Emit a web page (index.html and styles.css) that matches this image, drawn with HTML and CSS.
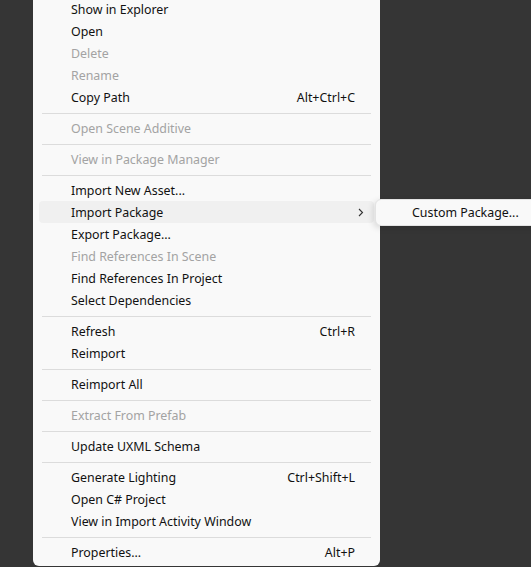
FILE: index.html
```html
<!DOCTYPE html>
<html>
<head>
<meta charset="utf-8">
<link rel="stylesheet" href="styles.css">
</head>
<body>
<div class="menu">
  <div class="item"><span>Show in Explorer</span></div>
  <div class="item"><span>Open</span></div>
  <div class="item disabled"><span>Delete</span></div>
  <div class="item disabled"><span>Rename</span></div>
  <div class="item"><span>Copy Path</span><span class="key">Alt+Ctrl+C</span></div>
  <div class="sep"></div>
  <div class="item disabled"><span>Open Scene Additive</span></div>
  <div class="sep"></div>
  <div class="item disabled"><span>View in Package Manager</span></div>
  <div class="sep"></div>
  <div class="item"><span>Import New Asset...</span></div>
  <div class="item hover"><span>Import Package</span>
    <svg class="chev" width="6" height="9" viewBox="0 0 6 9"><path d="M1 1 L4.5 4.5 L1 8" fill="none" stroke="#333" stroke-width="1.1"/></svg>
  </div>
  <div class="item"><span>Export Package...</span></div>
  <div class="item disabled"><span>Find References In Scene</span></div>
  <div class="item"><span>Find References In Project</span></div>
  <div class="item"><span>Select Dependencies</span></div>
  <div class="sep"></div>
  <div class="item"><span>Refresh</span><span class="key">Ctrl+R</span></div>
  <div class="item"><span>Reimport</span></div>
  <div class="sep"></div>
  <div class="item"><span>Reimport All</span></div>
  <div class="sep"></div>
  <div class="item disabled"><span>Extract From Prefab</span></div>
  <div class="sep"></div>
  <div class="item"><span>Update UXML Schema</span></div>
  <div class="sep"></div>
  <div class="item"><span>Generate Lighting</span><span class="key">Ctrl+Shift+L</span></div>
  <div class="item"><span>Open C# Project</span></div>
  <div class="item"><span>View in Import Activity Window</span></div>
  <div class="sep"></div>
  <div class="item"><span>Properties...</span><span class="key">Alt+P</span></div>
</div>
<div class="submenu"><span>Custom Package...</span></div>
</body>
</html>
```
FILE: styles.css
```css
html, body {
  margin: 0;
  padding: 0;
  background: #353535;
  height: 567px;
  overflow: hidden;
  font-family: "Noto Sans", "Open Sans", sans-serif;
  font-size: 12.4px;
  color: #111;
}
.menu {
  margin-top: -5px;
  margin-left: 33px;
  width: 347px;
  box-sizing: border-box;
  background: #f9f9f9;
  padding: 3px 6px 3px;
  border-radius: 0 0 6px 6px;
}
.item {
  height: 22px;
  display: flex;
  align-items: center;
  justify-content: space-between;
  padding: 0 19px 0 32px;
  border-radius: 4px;
  white-space: nowrap;
}
.item.disabled {
  color: #a3a3a3;
}
.item.hover {
  background: #f0f0f0;
  padding-right: 10px;
}
.sep {
  height: 1px;
  margin: 5px 3px 3px;
  background: #dcdcdc;
}
.submenu {
  position: absolute;
  left: 375px;
  top: 199px;
  width: 170px;
  height: 27px;
  box-sizing: border-box;
  background: #f9f9f9;
  border: 1px solid #e3e3e3;
  border-radius: 6px;
  box-shadow: -2px 2px 6px rgba(0,0,0,0.12);
  padding-left: 36px;
  padding-bottom: 1px;
  display: flex;
  align-items: center;
  white-space: nowrap;
}
```
